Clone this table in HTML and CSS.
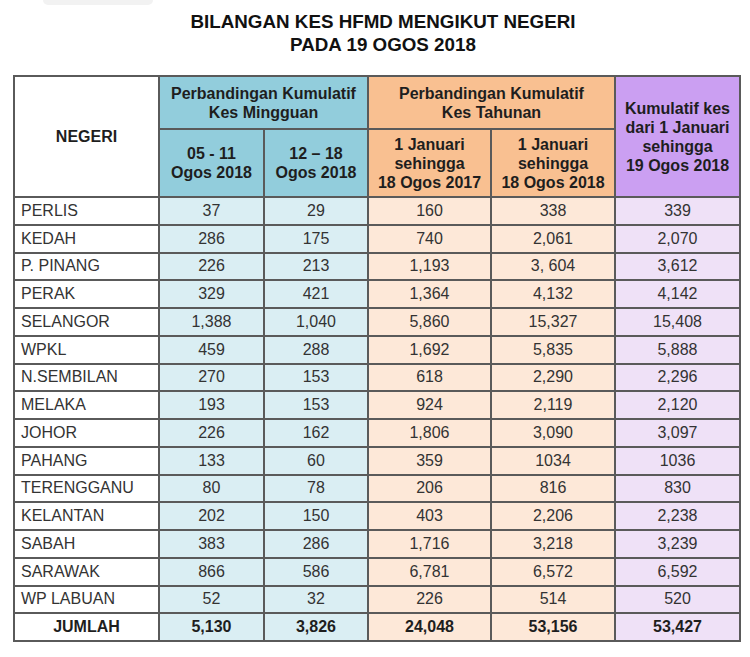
FILE: index.html
```html
<!DOCTYPE html>
<html lang="ms">
<head>
<meta charset="utf-8">
<title>Bilangan Kes HFMD Mengikut Negeri</title>
<link rel="stylesheet" href="styles.css">
</head>
<body>
<div class="tab-ghost"></div>
<h1 class="title">BILANGAN KES HFMD MENGIKUT NEGERI<br>PADA 19 OGOS 2018</h1>
<table class="hfmd">
  <colgroup>
    <col class="c-state"><col class="c-w1"><col class="c-w2"><col class="c-y1"><col class="c-y2"><col class="c-cum">
  </colgroup>
  <thead>
    <tr class="h1">
      <th rowspan="2" class="th-state">NEGERI</th>
      <th colspan="2" class="blue-h">Perbandingan Kumulatif<br>Kes Mingguan</th>
      <th colspan="2" class="orange-h">Perbandingan Kumulatif<br>Kes Tahunan</th>
      <th rowspan="2" class="purple-h">Kumulatif kes<br>dari 1 Januari<br>sehingga<br>19 Ogos 2018</th>
    </tr>
    <tr class="h2">
      <th class="blue-h">05 - 11<br>Ogos 2018</th>
      <th class="blue-h">12 – 18<br>Ogos 2018</th>
      <th class="orange-h">1 Januari<br>sehingga<br>18 Ogos 2017</th>
      <th class="orange-h">1 Januari<br>sehingga<br>18 Ogos 2018</th>
    </tr>
  </thead>
  <tbody>
    <tr><td class="st">PERLIS</td><td class="b">37</td><td class="b">29</td><td class="o">160</td><td class="o">338</td><td class="p">339</td></tr>
    <tr><td class="st">KEDAH</td><td class="b">286</td><td class="b">175</td><td class="o">740</td><td class="o">2,061</td><td class="p">2,070</td></tr>
    <tr><td class="st">P. PINANG</td><td class="b">226</td><td class="b">213</td><td class="o">1,193</td><td class="o">3, 604</td><td class="p">3,612</td></tr>
    <tr><td class="st">PERAK</td><td class="b">329</td><td class="b">421</td><td class="o">1,364</td><td class="o">4,132</td><td class="p">4,142</td></tr>
    <tr><td class="st">SELANGOR</td><td class="b">1,388</td><td class="b">1,040</td><td class="o">5,860</td><td class="o">15,327</td><td class="p">15,408</td></tr>
    <tr><td class="st">WPKL</td><td class="b">459</td><td class="b">288</td><td class="o">1,692</td><td class="o">5,835</td><td class="p">5,888</td></tr>
    <tr><td class="st">N.SEMBILAN</td><td class="b">270</td><td class="b">153</td><td class="o">618</td><td class="o">2,290</td><td class="p">2,296</td></tr>
    <tr><td class="st">MELAKA</td><td class="b">193</td><td class="b">153</td><td class="o">924</td><td class="o">2,119</td><td class="p">2,120</td></tr>
    <tr><td class="st">JOHOR</td><td class="b">226</td><td class="b">162</td><td class="o">1,806</td><td class="o">3,090</td><td class="p">3,097</td></tr>
    <tr><td class="st">PAHANG</td><td class="b">133</td><td class="b">60</td><td class="o">359</td><td class="o">1034</td><td class="p">1036</td></tr>
    <tr><td class="st">TERENGGANU</td><td class="b">80</td><td class="b">78</td><td class="o">206</td><td class="o">816</td><td class="p">830</td></tr>
    <tr><td class="st">KELANTAN</td><td class="b">202</td><td class="b">150</td><td class="o">403</td><td class="o">2,206</td><td class="p">2,238</td></tr>
    <tr><td class="st">SABAH</td><td class="b">383</td><td class="b">286</td><td class="o">1,716</td><td class="o">3,218</td><td class="p">3,239</td></tr>
    <tr><td class="st">SARAWAK</td><td class="b">866</td><td class="b">586</td><td class="o">6,781</td><td class="o">6,572</td><td class="p">6,592</td></tr>
    <tr><td class="st">WP LABUAN</td><td class="b">52</td><td class="b">32</td><td class="o">226</td><td class="o">514</td><td class="p">520</td></tr>
    <tr class="total"><td class="st st-total">JUMLAH</td><td class="b">5,130</td><td class="b">3,826</td><td class="o">24,048</td><td class="o">53,156</td><td class="p">53,427</td></tr>
  </tbody>
</table>
</body>
</html>
```
FILE: styles.css
```css
html, body {
  margin: 0;
  padding: 0;
  background: #ffffff;
}

body {
  font-family: "Liberation Sans", Arial, sans-serif;
  color: #333333;
}

.tab-ghost {
  width: 110px;
  height: 5px;
  margin-left: 43px;
  background: #f2f2f2;
  border-radius: 0 0 8px 8px;
}

.title {
  margin: 5px 0 0 16px;
  font-size: 18.8px;
  line-height: 23px;
  font-weight: bold;
  text-align: center;
  color: #111111;
}

.hfmd {
  margin: 19px 0 0 13px;
  width: 726px;
  table-layout: fixed;
  border-collapse: collapse;
  border: 2px solid #5e5e5e;
}

.c-state { width: 145px; }
.c-w1 { width: 105px; }
.c-w2 { width: 104px; }
.c-y1 { width: 123px; }
.c-y2 { width: 124px; }
.c-cum { width: 125px; }

.hfmd th,
.hfmd td {
  border: 2px solid #5a5a5a;
  padding: 0;
  text-align: center;
  vertical-align: middle;
}

.hfmd th {
  font-size: 16px;
  line-height: 19px;
  font-weight: bold;
  color: #1e1e1e;
}

.h1 { height: 53px; }
.h2 { height: 68px; }

.th-state { background: #ffffff; }
.blue-h { background: #92cddc; }
.orange-h { background: #f9c091; }
.purple-h { background: #cb9ff2; }

.hfmd tbody tr { height: 27.75px; }

.hfmd td {
  font-size: 16px;
  line-height: 18px;
  color: #333333;
}

.hfmd td.st {
  text-align: left;
  padding-left: 6px;
  background: #ffffff;
}

.hfmd td.b { background: #daeef3; }
.hfmd td.o { background: #fde8d8; }
.hfmd td.p { background: #efe1f7; }

.total td {
  font-weight: bold;
  color: #1e1e1e;
}

.hfmd td.st-total {
  text-align: center;
  padding-left: 0;
}
```
